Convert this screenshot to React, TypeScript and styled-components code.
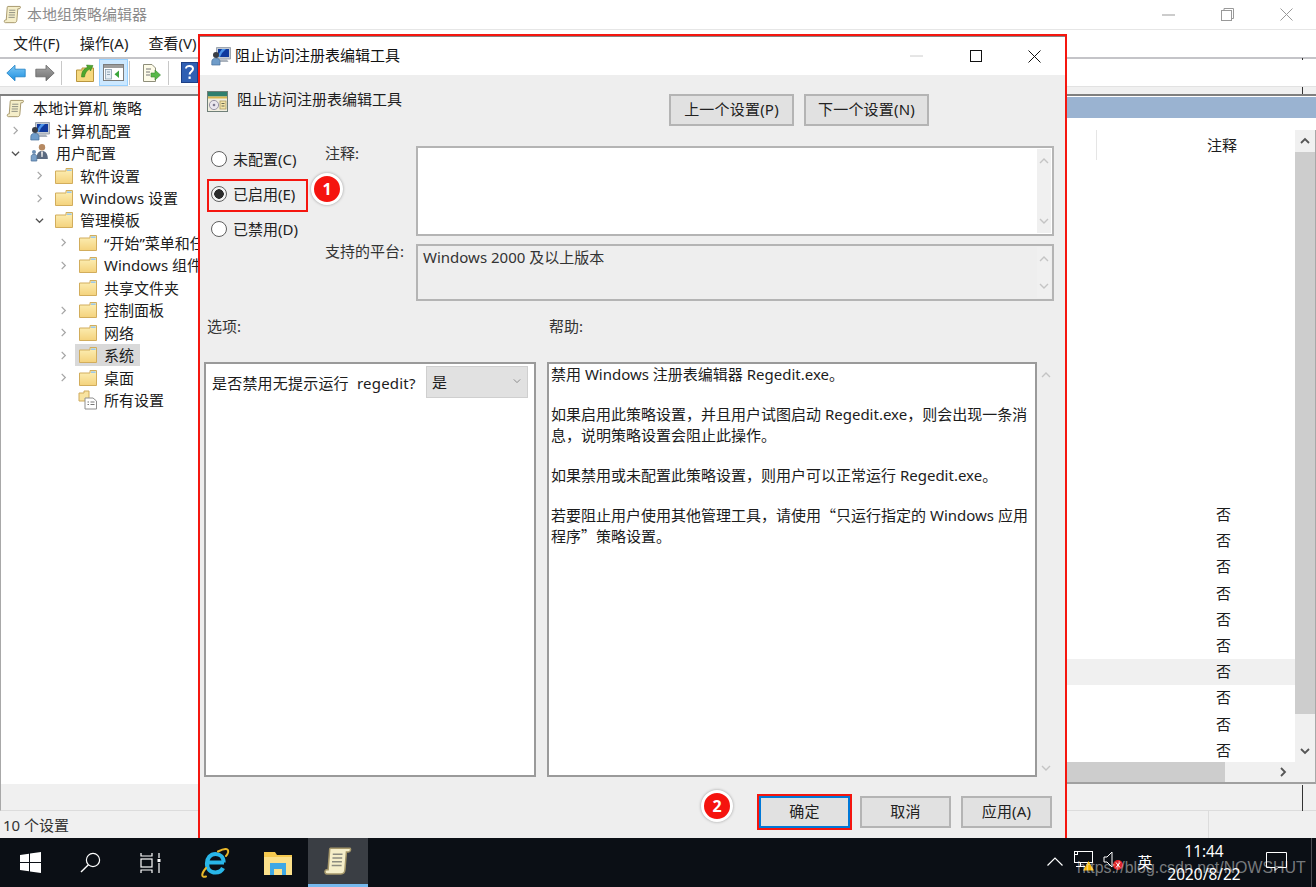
import { FC, ReactNode } from "react";
import styled, { createGlobalStyle } from "styled-components";

const GlobalStyle = createGlobalStyle`
  html, body {
    margin: 0;
    padding: 0;
    background: #fff;
  }
  body {
    font-family: "Noto Sans", "Noto Sans CJK SC", sans-serif;
    font-size: 15px;
    color: #1c1c1c;
  }
  *, *::before, *::after { box-sizing: border-box; }
`;

const Page = styled.div`
  position: relative;
  width: 1316px;
  height: 887px;
  overflow: hidden;
  display: flex;
  flex-direction: column;
  background: #fff;
`;

/* main window */

const TitleBar = styled.div`
  height: 30px;
  flex: none;
  display: flex;
  align-items: center;
  padding-left: 3px;
  border-bottom: 1px solid #e6e6e6;
`;

const TitleText = styled.span`
  margin-left: 5px;
  padding-bottom: 2px;
  color: #8b8b8b;
`;

const WindowControls = styled.div<{ $inset?: number }>`
  margin-left: auto;
  margin-right: ${(p) => p.$inset ?? 0}px;
  display: flex;
  align-items: center;
  svg { display: block; }
`;

const ControlSlot = styled.div`
  width: 59px;
  display: flex;
  justify-content: center;
`;

const MenuBar = styled.div`
  height: 27px;
  flex: none;
  display: flex;
  align-items: center;
  padding: 0 0 2px 13px;
  gap: 20px;
`;

const Toolbar = styled.div`
  height: 29px;
  flex: none;
  display: flex;
  align-items: center;
  padding-left: 6px;
  border-top: 2px solid #c4c4c8;
`;

const ToolSlot = styled.div<{ $w: number; $active?: boolean }>`
  width: ${(p) => p.$w}px;
  height: 27px;
  flex: none;
  display: flex;
  align-items: center;
  justify-content: center;
  ${(p) => (p.$active ? "background: #cce8ff; border: 1px solid #99d1ff;" : "")}
`;

const ToolDivider = styled.div`
  width: 1px;
  height: 24px;
  flex: none;
  background: #c8c8c8;
`;

const ResizeTick = styled.i<{ $h: number; $top: number }>`
  position: absolute;
  left: 1302px;
  top: ${(p) => p.$top}px;
  width: 1px;
  height: ${(p) => p.$h}px;
  background: #333;
`;

const Strip = styled.div`
  height: 8px;
  flex: none;
  background: #f0f0f0;
  border-top: 1px solid #e2e2e2;
`;

const Workspace = styled.div`
  flex: 1;
  min-height: 0;
  display: flex;
  border-top: 2px solid #7f7f7f;
`;

const TreePane = styled.div`
  width: 198px;
  flex: none;
  border-left: 1px solid #a8a8a8;
  overflow: hidden;
`;

const TreeBody = styled.div`
  position: relative;
  z-index: 0;
  padding-top: 1px;
`;

const TreeRow = styled.div<{ $level: number; $root?: boolean }>`
  height: 22.46px;
  display: flex;
  align-items: center;
  white-space: nowrap;
  padding-left: ${(p) => (p.$root ? 5 : p.$level * 24 + 2)}px;
`;

const Arrow = styled.div`
  width: 24px;
  flex: none;
  display: flex;
  justify-content: center;
  svg { display: block; }
`;

const TreeIcon = styled.div<{ $root?: boolean }>`
  width: ${(p) => (p.$root ? 26 : 28)}px;
  flex: none;
  display: flex;
  padding-left: ${(p) => (p.$root ? 0 : 3)}px;
  svg { display: block; }
`;

const TreeLabel = styled.span<{ $selected?: boolean }>`
  position: relative;
  line-height: 22px;
  margin-left: 1px;
  ${(p) =>
    p.$selected
      ? `&::before {
          content: "";
          position: absolute;
          z-index: -1;
          left: -29px;
          right: -6px;
          top: 0;
          bottom: 0;
          background: #d9d9d9;
        }`
      : ""}
`;

const ListPane = styled.div`
  flex: 1;
  min-width: 0;
  display: flex;
  flex-direction: column;
  padding-top: 1px;
`;

const BlueBar = styled.div`
  height: 21px;
  flex: none;
  background: #9ab3d1;
`;

const ListBody = styled.div`
  flex: 1;
  min-height: 0;
  display: flex;
  padding-top: 12px;
`;

const Rows = styled.div`
  flex: 1;
  min-width: 0;
  overflow: hidden;
`;

const ColumnHeader = styled.div`
  height: 30px;
  display: flex;
  align-items: center;
`;

const ColumnName = styled.div`
  width: 899px;
  height: 100%;
  flex: none;
  border-right: 1px solid #e5e5e5;
`;

const ColumnNote = styled.div`
  padding: 0 0 2px 110px;
`;

const RowList = styled.div`
  padding-top: 342px;
`;

const NoteRow = styled.div<{ $hover?: boolean }>`
  height: 26.2px;
  line-height: 25px;
  text-align: right;
  padding-right: 64px;
  background: ${(p) => (p.$hover ? "#f0f0f0" : "transparent")};
`;

const VScroll = styled.div`
  width: 21px;
  flex: none;
  display: flex;
  flex-direction: column;
  background: #f0f0f0;
  border-right: 1px solid #a8a8a8;
`;

const ScrollEnd = styled.div`
  height: 22px;
  flex: none;
  display: flex;
  align-items: center;
  justify-content: center;
  svg { display: block; }
`;

const VThumb = styled.div`
  height: 562px;
  flex: none;
  background: #cdcdcd;
`;

const ScrollEndBottom = styled(ScrollEnd)`
  margin-top: auto;
`;

const HScroll = styled.div`
  height: 22px;
  flex: none;
  display: flex;
  align-items: center;
  background: #f0f0f0;
  border-bottom: 2px solid #a0a0a0;
  border-right: 1px solid #a8a8a8;
`;

const HThumb = styled.div`
  width: 1027px;
  height: 100%;
  background: #cdcdcd;
`;

const HArrow = styled.div`
  margin-left: 53px;
  display: flex;
  svg { display: block; }
`;

const LowerStrip = styled.div`
  height: 27px;
  flex: none;
  background: #f0f0f0;
  border-bottom: 1px solid #dcdcdc;
  border-left: 1px solid #a8a8a8;
`;

const StatusBar = styled.div`
  height: 27px;
  flex: none;
  display: flex;
  align-items: center;
  padding-left: 3px;
  background: #f0f0f0;
  color: #333;
`;

const StatusDivider = styled.div`
  margin-left: auto;
  margin-right: 107px;
  width: 1px;
  height: 100%;
  background: #dcdcdc;
`;

/* dialog */

const Dialog = styled.div`
  position: absolute;
  left: 198px;
  top: 34px;
  width: 869px;
  height: 806px;
  border: 2px solid #f5160f;
  background: #eeeeee;
  display: flex;
  flex-direction: column;
`;

const DialogTitle = styled.div`
  height: 39px;
  flex: none;
  display: flex;
  align-items: center;
  padding-left: 11px;
  background: #fff;
  border-top: 1px solid #868686;
  color: #111;
`;

const DialogTitleText = styled.span`
  margin-left: 4px;
  padding-bottom: 3px;
`;

const DialogBody = styled.div`
  flex: 1;
  padding: 0 11px 0 4px;
  display: flex;
  flex-direction: column;
`;

const HeadRow = styled.div`
  height: 66px;
  flex: none;
  display: flex;
  align-items: flex-start;
`;

const HeadIcon = styled.div`
  margin: 16px 0 0 3px;
  width: 22px;
  svg { display: block; }
`;

const HeadText = styled.span`
  margin: 13px 0 0 8px;
  line-height: 22px;
`;

const NavButtons = styled.div`
  margin: 19px 125px 0 auto;
  display: flex;
  gap: 10px;
`;

const Button = styled.div<{ $w: number; $primary?: boolean }>`
  width: ${(p) => p.$w}px;
  height: 32px;
  display: flex;
  align-items: center;
  justify-content: center;
  padding-bottom: 3px;
  letter-spacing: 0.2px;
  background: #e1e1e1;
  border: 2px solid ${(p) => (p.$primary ? "#0078d7" : "#b4b4b4")};
  ${(p) => (p.$primary ? "outline: 2px solid #f5160f;" : "")}
  color: #222;
`;

const ConfigRow = styled.div`
  height: 160px;
  flex: none;
  display: flex;
`;

const RadioColumn = styled.div`
  width: 121px;
  flex: none;
`;

const RadioRow = styled.div<{ $marked?: boolean }>`
  position: relative;
  height: 35px;
  display: flex;
  align-items: center;
  gap: 6px;
  padding-left: 7px;
  color: #222;
  ${(p) =>
    p.$marked
      ? `&::before {
          content: "";
          position: absolute;
          left: 3px;
          top: 3px;
          width: 101px;
          height: 33px;
          border: 2px solid #f5160f;
        }`
      : ""}
`;

const RadioDot = styled.span<{ $checked?: boolean }>`
  width: 16px;
  height: 16px;
  flex: none;
  border-radius: 50%;
  border: 1.5px solid #5f5f5f;
  background: ${(p) =>
    p.$checked ? "radial-gradient(circle, #2b2b2b 0 4.5px, #f4f4f4 5px)" : "#fff"};
`;

const Badge = styled.div<{ $x: number; $y: number }>`
  position: absolute;
  left: ${(p) => p.$x}px;
  top: ${(p) => p.$y}px;
  width: 32px;
  height: 32px;
  border-radius: 50%;
  display: flex;
  align-items: center;
  justify-content: center;
  background: #f5140f;
  border: 3px solid #fff;
  box-shadow: 0 0 3px rgba(0, 0, 0, 0.35);
  color: #fff;
  font-weight: 700;
  font-size: 16px;
  z-index: 2;
`;

const FieldGrid = styled.div`
  flex: 1;
  display: grid;
  grid-template-columns: 91px 1fr;
  grid-template-rows: 90px 57px;
  row-gap: 8px;
  padding-top: 5px;
`;

const FieldLabel = styled.div`
  line-height: 14px;
  color: #333;
`;

const FieldBox = styled.div<{ $readOnly?: boolean }>`
  display: flex;
  justify-content: space-between;
  padding: 1px;
  border: 2px solid #b4b4b4;
  background: ${(p) => (p.$readOnly ? "#eeeeee" : "#fff")};
  color: #333;
`;

const FieldValue = styled.div`
  padding-left: 4px;
  line-height: 20px;
`;

const FieldScroll = styled.div`
  width: 14px;
  flex: none;
  display: flex;
  flex-direction: column;
  align-items: center;
  justify-content: space-between;
  padding: 7px 0;
  background: #f0f0f0;
  svg { display: block; }
`;

const SectionRow = styled.div`
  height: 61px;
  flex: none;
  display: grid;
  grid-template-columns: 342px 1fr;
  padding: 15px 0 0 3px;
  line-height: 20px;
  color: #333;
`;

const PanelRow = styled.div`
  height: 415px;
  flex: none;
  display: grid;
  grid-template-columns: 332px 490px 1fr;
  column-gap: 11px;
`;

const Panel = styled.div`
  min-width: 0;
  background: #fff;
  border: 2px solid #9a9a9a;
`;

const OptionLine = styled.div`
  display: flex;
  align-items: center;
  padding: 2px 0 0 6px;
`;

const OptionLabel = styled.span`
  width: 214px;
  flex: none;
  white-space: nowrap;
  letter-spacing: 0.2px;
`;

const Combo = styled.div`
  width: 102px;
  height: 32px;
  display: flex;
  align-items: center;
  justify-content: space-between;
  padding: 0 6px 2px 5px;
  background: #e1e1e1;
  border: 1px solid #cfcfcf;
  svg { display: block; }
`;

const HelpText = styled.div`
  padding: 0 3px 0 2px;
  line-height: 20.2px;
  color: #1c1c1c;
`;

const HelpParagraph = styled.p`
  margin: 0 0 20.2px;
`;

const CjkQuote = styled.span`
  font-family: "Noto Sans CJK SC", sans-serif;
`;

const PanelScroll = styled.div`
  margin-left: -11px;
  display: flex;
  flex-direction: column;
  align-items: center;
  justify-content: space-between;
  padding: 8px 0 4px;
  width: 17px;
  svg { display: block; }
`;

const DialogFooter = styled.div`
  position: relative;
  margin-top: 19px;
  display: flex;
  justify-content: flex-end;
  gap: 10px;
  padding-right: 2px;
`;

/* taskbar */

const Taskbar = styled.div`
  position: relative;
  height: 49px;
  flex: none;
  display: flex;
  align-items: center;
  background: #0b0f15;
  color: #fff;
`;

const TaskButton = styled.div<{ $active?: boolean; $gapLeft?: number }>`
  width: 60px;
  height: 100%;
  flex: none;
  margin-left: ${(p) => p.$gapLeft ?? 0}px;
  display: flex;
  align-items: center;
  justify-content: center;
  ${(p) => (p.$active ? "background: #3a3e44; border-bottom: 3px solid #76b9ed;" : "")}
  svg { display: block; }
`;

const Tray = styled.div`
  margin-left: auto;
  height: 100%;
  display: flex;
  align-items: center;
`;

const TrayItem = styled.div<{ $w: number }>`
  width: ${(p) => p.$w}px;
  height: 100%;
  display: flex;
  align-items: center;
  justify-content: center;
  padding-bottom: 3px;
  svg { display: block; }
`;

const Clock = styled.div`
  width: 88px;
  text-align: center;
  line-height: 23px;
  font-size: 15.4px;
`;

const DesktopEdge = styled.div`
  width: 12px;
  height: 100%;
  position: relative;
  &::after {
    content: "";
    position: absolute;
    left: 7px;
    top: 0;
    bottom: 0;
    width: 1px;
    background: #4a4d52;
  }
`;

const Watermark = styled.div`
  position: absolute;
  left: 1077px;
  top: 20px;
  font-family: "Liberation Sans", sans-serif;
  font-size: 15.9px;
  line-height: 20px;
  color: rgba(255, 255, 255, 0.45);
  white-space: nowrap;
`;

/* drawings */

const Chevron: FC<{ dir: "up" | "down" | "left" | "right"; size?: number; color?: string; width?: number }> = ({
  dir,
  size = 10,
  color = "#777",
  width = 1.4,
}) => {
  const paths = {
    up: "M1 7 L5 3 L9 7",
    down: "M1 3 L5 7 L9 3",
    right: "M3 1 L7 5 L3 9",
    left: "M7 1 L3 5 L7 9",
  };
  return (
    <svg width={size} height={size} viewBox="0 0 10 10" fill="none">
      <path d={paths[dir]} stroke={color} strokeWidth={width} />
    </svg>
  );
};

const ScrollIcon: FC<{ size?: number }> = ({ size = 20 }) => (
  <svg width={size} height={size} viewBox="0 0 20 20">
    <path d="M5 1.5 H18 C18.6 1.5 18.6 4 17 4 L15.6 4 L14.6 16 C14.4 18 13.4 18.6 12 18.6 H2.5 C1 18.6 .8 15.8 2.5 15.8 L3.4 15.8 L4.4 3 C4.4 2 4.6 1.5 5 1.5 Z" fill="#f5eec9" stroke="#a5976a" strokeWidth="1" />
    <path d="M6.5 5.5 H13 M6.3 8 H12.8 M6 10.5 H12.6 M5.8 13 H12.4" stroke="#8c8c80" strokeWidth="1" />
  </svg>
);

const FolderIcon: FC = () => (
  <svg width="20" height="18" viewBox="0 0 20 18">
    <defs>
      <linearGradient id="folderFill" x1="0" y1="0" x2="0" y2="1">
        <stop offset="0" stopColor="#fdf0b8" />
        <stop offset="1" stopColor="#f4d27c" />
      </linearGradient>
    </defs>
    <path d="M1.5 4 H12 V1.5 H18.5 V16.5 H1.5 Z" fill="url(#folderFill)" stroke="#d2ad5c" strokeWidth="1" />
    <rect x="13" y="2.4" width="4.6" height="1.6" fill="#9cc8e8" />
  </svg>
);

const AllSettingsIcon: FC = () => (
  <svg width="20" height="20" viewBox="0 0 20 20">
    <path d="M1 3 H6 V1 H11 V11 H1 Z" fill="#f8e3a0" stroke="#cfab5e" strokeWidth="1" />
    <path d="M7 8 H15 L18.5 11 V19 H7 Z" fill="#fff" stroke="#8e8e8e" strokeWidth="1" />
    <path d="M9.5 12 H11 M9.5 14.5 H11 M12.5 12 H16.5 M12.5 14.5 H16.5" stroke="#777" strokeWidth="1" />
  </svg>
);

const ComputerIcon: FC = () => (
  <svg width="20" height="20" viewBox="0 0 20 20">
    <path d="M5.5 1.5 H19.5 V13 H5.5 Z" fill="#c4cad2" stroke="#8d96a1" strokeWidth=".8" />
    <rect x="7" y="3" width="11" height="8" fill="#103a9e" />
    <path d="M11 3 H15 L11 7 L9 11 H7 V9 Z" fill="#4b93ea" />
    <path d="M9 13.5 H16 L17.5 16 H8 Z" fill="#aab2bc" />
    <circle cx="5" cy="9" r="3" fill="#3a3d44" />
    <path d="M.8 19 V15.5 C.8 13.2 2.8 12.2 5 12.2 C7.2 12.2 9 13.2 9 15.5 V19 Z" fill="#6f9cc9" stroke="#466f9a" strokeWidth=".7" />
  </svg>
);

const UsersIcon: FC = () => (
  <svg width="20" height="20" viewBox="0 0 20 20">
    <circle cx="12" cy="4.2" r="3.2" fill="#b68a62" />
    <path d="M6.5 16 C6.5 10.5 8.5 8 12 8 C15.5 8 17.8 10.5 17.8 16 Z" fill="#5b6a80" />
    <path d="M11 8.4 H13 L12.6 14 H11.4 Z" fill="#e7e7e7" />
    <circle cx="4" cy="9" r="2" fill="#6d8fb5" />
    <path d="M1.2 18 V13.5 C1.2 12 2.2 11.4 4 11.4 C5.8 11.4 6.8 12 6.8 13.5 V18 Z" fill="#7aa0c8" stroke="#4d7199" strokeWidth=".8" />
  </svg>
);

const NavArrow: FC<{ dir: "back" | "forward"; from: string; to: string; edge: string }> = ({ dir, from, to, edge }) => (
  <svg width="20" height="18" viewBox="0 0 20 18">
    <defs>
      <linearGradient id={`nav-${dir}`} x1="0" y1="0" x2="0" y2="1">
        <stop offset="0" stopColor={from} />
        <stop offset="1" stopColor={to} />
      </linearGradient>
    </defs>
    <path
      d={dir === "back" ? "M.8 9 L9 1.2 V5.2 H19.2 V12.8 H9 V16.8 Z" : "M19.2 9 L11 1.2 V5.2 H.8 V12.8 H11 V16.8 Z"}
      fill={`url(#nav-${dir})`}
      stroke={edge}
      strokeWidth=".8"
    />
  </svg>
);

const UpFolderIcon: FC = () => (
  <svg width="20" height="20" viewBox="0 0 20 20">
    <path d="M1.5 7 H7 V5 H18.5 V18.5 H1.5 Z" fill="#f6d97f" stroke="#b9963f" strokeWidth="1" />
    <path d="M6.5 14 C6.5 8 9 5.5 12.5 4.5 L11.5 2 L18 2.5 L15.5 8 L14.6 6 C12 7.5 10 10 9.5 14 Z" fill="#4ea72e" stroke="#2f7a1a" strokeWidth=".5" />
  </svg>
);

const PaneToggleIcon: FC = () => (
  <svg width="21" height="17" viewBox="0 0 21 17">
    <rect x=".5" y=".5" width="20" height="16" fill="#fff" stroke="#7c7c7c" strokeWidth="1" />
    <rect x="1" y="1" width="19" height="3" fill="#9c9c9c" />
    <rect x="2.5" y="5.5" width="6" height="9.5" fill="#e7eef4" stroke="#8aa0b0" strokeWidth=".8" />
    <path d="M4 8 H7 M4 10.5 H7" stroke="#7d93a5" strokeWidth=".8" />
    <path d="M16 6.5 V14 L11.5 10.2 Z" fill="#3aa53a" />
  </svg>
);

const ExportIcon: FC = () => (
  <svg width="20" height="20" viewBox="0 0 20 20">
    <path d="M2.5 1.5 H11 L14.5 5 V18.5 H2.5 Z" fill="#fdfbe8" stroke="#8e8e7a" strokeWidth="1" />
    <path d="M5 6 H10 M5 9 H9 M5 12 H9" stroke="#777" strokeWidth="1" />
    <path d="M10 10 H14 V7 L19.5 12 L14 17 V14 H10 Z" fill="#58b947" stroke="#3b8a2c" strokeWidth=".6" />
  </svg>
);

const HelpIcon: FC = () => (
  <svg width="17" height="21" viewBox="0 0 17 21">
    <rect x=".5" y=".5" width="16" height="20" fill="#2f5fb3" stroke="#1d3f86" />
    <path d="M5 6.5 C5 3 12 3 12 6.8 C12 9.5 8.6 9.6 8.6 12.6" fill="none" stroke="#fff" strokeWidth="2" />
    <rect x="7.5" y="14.5" width="2.2" height="2.4" fill="#fff" />
  </svg>
);

const PolicyWindowIcon: FC = () => (
  <svg width="21" height="21" viewBox="0 0 21 21">
    <rect x=".5" y=".5" width="20" height="20" fill="#f1eee0" stroke="#6f7f78" strokeWidth="1" />
    <rect x="1" y="1" width="19" height="4.5" fill="#2f7f6e" />
    <rect x="1" y="5.5" width="19" height="2" fill="#d9b64e" />
    <circle cx="7" cy="14" r="4.6" fill="#e9e6ee" stroke="#9a96a8" strokeWidth="1" />
    <circle cx="7" cy="14" r="1.3" fill="#7f7b90" />
    <rect x="13" y="10" width="6" height="8" fill="#f3e4a8" stroke="#a99a62" strokeWidth=".8" />
    <path d="M14.5 12.5 H17.5 M14.5 15 H17.5" stroke="#6b6a52" strokeWidth="1" />
  </svg>
);

const WindowsLogo: FC = () => (
  <svg width="21" height="21" viewBox="0 0 21 21">
    <path d="M0 3 L9 1.7 V10 H0 Z M10 1.5 L21 0 V10 H10 Z M0 11 H9 V19.3 L0 18 Z M10 11 H21 V21 L10 19.5 Z" fill="#fff" />
  </svg>
);

const SearchGlyph: FC = () => (
  <svg width="21" height="21" viewBox="0 0 21 21" fill="none">
    <circle cx="13" cy="8" r="6.6" stroke="#fff" strokeWidth="1.2" />
    <path d="M8.4 12.8 L1 20" stroke="#fff" strokeWidth="1.4" />
  </svg>
);

const TaskViewGlyph: FC = () => (
  <svg width="21" height="20" viewBox="0 0 21 20" fill="none" stroke="#fff" strokeWidth="1.2">
    <path d="M1 0 V3 H12 V0" />
    <rect x="1" y="6" width="11" height="8" />
    <path d="M1 20 V17 H12 V20" />
    <path d="M19 0 V5 M19 10 V20" />
    <rect x="17.5" y="6" width="3" height="3" fill="#fff" stroke="none" />
  </svg>
);

const IeGlyph: FC = () => (
  <svg width="30" height="30" viewBox="0 0 30 30" fill="none">
    <path d="M24 14.5 H8 M23.6 14.5 C23.6 9 20 6 15.5 6 C10.5 6 7 10 7 15.5 C7 21 10.5 24.5 15.5 24.5 C19 24.5 21.6 23 23 20" stroke="#29b6e8" strokeWidth="4.2" />
    <path d="M6 20 C1 26 1 30 6 28.5 M18 3.5 C25 0 29 0 28 4.5 C27.6 6 27 7 26 8" stroke="#e8b72a" strokeWidth="2" strokeLinecap="round" />
  </svg>
);

const ExplorerGlyph: FC = () => (
  <svg width="28" height="25" viewBox="0 0 28 25">
    <path d="M0 2 H11 L13 5 H28 V25 H0 Z" fill="#f5c94f" />
    <rect x="0" y="7" width="28" height="18" fill="#fbe08a" />
    <path d="M6 13 H22 V25 H18 V19 H10 V25 H6 Z" fill="#3ea8e5" />
  </svg>
);

const NetworkGlyph: FC = () => (
  <svg width="22" height="20" viewBox="0 0 22 20" fill="none">
    <rect x=".5" y=".5" width="18" height="11" stroke="#fff" />
    <rect x=".5" y=".5" width="3" height="3" stroke="#fff" />
    <path d="M2 15.5 H11 M6.5 12 V15.5" stroke="#fff" />
    <path d="M14.5 10 L20 19.5 H9 Z" fill="#f7b500" />
  </svg>
);

const SpeakerGlyph: FC = () => (
  <svg width="24" height="20" viewBox="0 0 24 20" fill="none">
    <path d="M1 6 H4 L9 1 V16 L4 11 H1 Z" stroke="#fff" />
    <circle cx="15" cy="14" r="5" fill="#e0242a" />
    <path d="M13 11.5 L17 16.5 M17 11.5 L13 16.5" stroke="#fff" />
  </svg>
);

const CaretGlyph: FC = () => (
  <svg width="16" height="9" viewBox="0 0 16 9" fill="none">
    <path d="M.5 8.5 L8 1 L15.5 8.5" stroke="#fff" strokeWidth="1.2" />
  </svg>
);

const NotifyGlyph: FC = () => (
  <svg width="21" height="21" viewBox="0 0 21 21" fill="none">
    <path d="M.5 1.5 H20.5 V16.5 H12 L9 19.5 V16.5 H.5 Z" stroke="#fff" />
  </svg>
);

/* data */

interface TreeItem {
  level: number;
  label: string;
  arrow?: "right" | "down";
  icon: ReactNode;
  selected?: boolean;
}

const treeItems: TreeItem[] = [
  { level: 0, label: "计算机配置", arrow: "right", icon: <ComputerIcon /> },
  { level: 0, label: "用户配置", arrow: "down", icon: <UsersIcon /> },
  { level: 1, label: "软件设置", arrow: "right", icon: <FolderIcon /> },
  { level: 1, label: "Windows 设置", arrow: "right", icon: <FolderIcon /> },
  { level: 1, label: "管理模板", arrow: "down", icon: <FolderIcon /> },
  { level: 2, label: "“开始”菜单和任务栏", arrow: "right", icon: <FolderIcon /> },
  { level: 2, label: "Windows 组件", arrow: "right", icon: <FolderIcon /> },
  { level: 2, label: "共享文件夹", icon: <FolderIcon /> },
  { level: 2, label: "控制面板", arrow: "right", icon: <FolderIcon /> },
  { level: 2, label: "网络", arrow: "right", icon: <FolderIcon /> },
  { level: 2, label: "系统", arrow: "right", icon: <FolderIcon />, selected: true },
  { level: 2, label: "桌面", arrow: "right", icon: <FolderIcon /> },
  { level: 2, label: "所有设置", icon: <AllSettingsIcon /> },
];

const noteRows = Array.from({ length: 10 }, (_, i) => i);

const App: FC = () => {
  return (
    <Page>
      <GlobalStyle />
      <TitleBar>
        <ScrollIcon size={19} />
        <TitleText>本地组策略编辑器</TitleText>
        <WindowControls>
          <ControlSlot>
            <svg width="13" height="2" viewBox="0 0 13 2"><path d="M0 1 H13" stroke="#999" strokeWidth="1" /></svg>
          </ControlSlot>
          <ControlSlot>
            <svg width="13" height="13" viewBox="0 0 13 13" fill="none" stroke="#999">
              <rect x=".5" y="2.5" width="10" height="10" />
              <path d="M3 2.5 V.5 H12.5 V10.5 H10.5" />
            </svg>
          </ControlSlot>
          <ControlSlot>
            <svg width="13" height="13" viewBox="0 0 13 13" stroke="#999"><path d="M.5 .5 L12.5 12.5 M12.5 .5 L.5 12.5" /></svg>
          </ControlSlot>
        </WindowControls>
      </TitleBar>

      <MenuBar>
        <span>文件(F)</span>
        <span>操作(A)</span>
        <span>查看(V)</span>
        <span>帮助(H)</span>
      </MenuBar>

      <Toolbar>
        <ToolSlot $w={20}><NavArrow dir="back" from="#7cc8f5" to="#1d8fe0" edge="#1c7fc4" /></ToolSlot>
        <ToolSlot $w={9} />
        <ToolSlot $w={20}><NavArrow dir="forward" from="#a8a8a8" to="#707070" edge="#666" /></ToolSlot>
        <ToolSlot $w={6} />
        <ToolDivider />
        <ToolSlot $w={13} />
        <ToolSlot $w={20}><UpFolderIcon /></ToolSlot>
        <ToolSlot $w={4} />
        <ToolSlot $w={29} $active><PaneToggleIcon /></ToolSlot>
        <ToolSlot $w={1} />
        <ToolDivider />
        <ToolSlot $w={11} />
        <ToolSlot $w={20}><ExportIcon /></ToolSlot>
        <ToolSlot $w={7} />
        <ToolDivider />
        <ToolSlot $w={12} />
        <ToolSlot $w={17}><HelpIcon /></ToolSlot>
      </Toolbar>
      <ResizeTick $top={58} $h={2} />
      <ResizeTick $top={87} $h={7} />

      <Strip />

      <Workspace>
        <TreePane>
          <TreeBody>
            <TreeRow $level={0} $root>
              <TreeIcon $root><ScrollIcon size={19} /></TreeIcon>
              <TreeLabel>本地计算机 策略</TreeLabel>
            </TreeRow>
            {treeItems.map((item) => (
              <TreeRow key={item.label} $level={item.level}>
                <Arrow>{item.arrow && <Chevron dir={item.arrow} size={9} color={item.arrow === "down" ? "#555" : "#a6a6a6"} />}</Arrow>
                <TreeIcon>{item.icon}</TreeIcon>
                <TreeLabel $selected={item.selected}>{item.label}</TreeLabel>
              </TreeRow>
            ))}
          </TreeBody>
        </TreePane>
        <ListPane>
          <BlueBar />
          <ListBody>
            <Rows>
              <ColumnHeader>
                <ColumnName />
                <ColumnNote>注释</ColumnNote>
              </ColumnHeader>
              <RowList>
                {noteRows.map((i) => (
                  <NoteRow key={i} $hover={i === 6}>否</NoteRow>
                ))}
              </RowList>
            </Rows>
            <VScroll>
              <ScrollEnd><Chevron dir="up" color="#555" width={1.8} /></ScrollEnd>
              <VThumb />
              <ScrollEndBottom><Chevron dir="down" color="#555" width={1.8} /></ScrollEndBottom>
            </VScroll>
          </ListBody>
          <HScroll>
            <HThumb />
            <HArrow><Chevron dir="right" color="#555" width={1.8} /></HArrow>
          </HScroll>
        </ListPane>
      </Workspace>
      <LowerStrip />
      <ResizeTick $top={785} $h={26} />
      <StatusBar>
        <span>10 个设置</span>
        <StatusDivider />
      </StatusBar>

      <Dialog>
        <DialogTitle>
          <ComputerIcon />
          <DialogTitleText>阻止访问注册表编辑工具</DialogTitleText>
          <WindowControls $inset={1}>
            <ControlSlot>
              <svg width="13" height="2" viewBox="0 0 13 2"><path d="M0 1 H13" stroke="#ccc" strokeWidth="1" /></svg>
            </ControlSlot>
            <ControlSlot>
              <svg width="12" height="12" viewBox="0 0 12 12" fill="none" stroke="#111"><rect x=".5" y=".5" width="11" height="11" /></svg>
            </ControlSlot>
            <ControlSlot>
              <svg width="13" height="13" viewBox="0 0 13 13" stroke="#111"><path d="M.5 .5 L12.5 12.5 M12.5 .5 L.5 12.5" /></svg>
            </ControlSlot>
          </WindowControls>
        </DialogTitle>
        <DialogBody>
          <HeadRow>
            <HeadIcon><PolicyWindowIcon /></HeadIcon>
            <HeadText>阻止访问注册表编辑工具</HeadText>
            <NavButtons>
              <Button $w={125}>上一个设置(P)</Button>
              <Button $w={125}>下一个设置(N)</Button>
            </NavButtons>
          </HeadRow>
          <ConfigRow>
            <RadioColumn>
              <RadioRow><RadioDot />未配置(C)</RadioRow>
              <RadioRow $marked>
                <RadioDot $checked />已启用(E)
                <Badge $x={107} $y={-3}>1</Badge>
              </RadioRow>
              <RadioRow><RadioDot />已禁用(D)</RadioRow>
            </RadioColumn>
            <FieldGrid>
              <FieldLabel>注释:</FieldLabel>
              <FieldBox>
                <FieldValue />
                <FieldScroll>
                  <Chevron dir="up" color="#c4c4c4" />
                  <Chevron dir="down" color="#c4c4c4" />
                </FieldScroll>
              </FieldBox>
              <FieldLabel>支持的平台:</FieldLabel>
              <FieldBox $readOnly>
                <FieldValue>Windows 2000 及以上版本</FieldValue>
                <FieldScroll>
                  <Chevron dir="up" color="#c4c4c4" />
                  <Chevron dir="down" color="#c4c4c4" />
                </FieldScroll>
              </FieldBox>
            </FieldGrid>
          </ConfigRow>
          <SectionRow>
            <div>选项:</div>
            <div>帮助:</div>
          </SectionRow>
          <PanelRow>
            <Panel>
              <OptionLine>
                <OptionLabel>是否禁用无提示运行&nbsp;&nbsp;regedit?</OptionLabel>
                <Combo>是<Chevron dir="down" size={8} color="#888" width={1.2} /></Combo>
              </OptionLine>
            </Panel>
            <Panel>
              <HelpText>
                <HelpParagraph>禁用 Windows 注册表编辑器 Regedit.exe。</HelpParagraph>
                <HelpParagraph>如果启用此策略设置，并且用户试图启动 Regedit.exe，则会出现一条消息，说明策略设置会阻止此操作。</HelpParagraph>
                <HelpParagraph>如果禁用或未配置此策略设置，则用户可以正常运行 Regedit.exe。</HelpParagraph>
                <HelpParagraph>
                  若要阻止用户使用其他管理工具，请使用<CjkQuote>“</CjkQuote>只运行指定的 Windows 应用程序<CjkQuote>”</CjkQuote>策略设置。
                </HelpParagraph>
              </HelpText>
            </Panel>
            <PanelScroll>
              <Chevron dir="up" color="#c4c4c4" />
              <Chevron dir="down" color="#c4c4c4" />
            </PanelScroll>
          </PanelRow>
          <DialogFooter>
            <Badge $x={497} $y={-6}>2</Badge>
            <Button $w={91} $primary>确定</Button>
            <Button $w={91}>取消</Button>
            <Button $w={91}>应用(A)</Button>
          </DialogFooter>
        </DialogBody>
      </Dialog>

      <Taskbar>
        <TaskButton><WindowsLogo /></TaskButton>
        <TaskButton><SearchGlyph /></TaskButton>
        <TaskButton><TaskViewGlyph /></TaskButton>
        <TaskButton $gapLeft={5}><IeGlyph /></TaskButton>
        <TaskButton $gapLeft={3}><ExplorerGlyph /></TaskButton>
        <TaskButton $active><ScrollIcon size={30} /></TaskButton>
        <Tray>
          <TrayItem $w={30}><CaretGlyph /></TrayItem>
          <TrayItem $w={30}><NetworkGlyph /></TrayItem>
          <TrayItem $w={30}><SpeakerGlyph /></TrayItem>
          <TrayItem $w={30}>英</TrayItem>
          <Clock>
            <div>11:44</div>
            <div>2020/8/22</div>
          </Clock>
          <TrayItem $w={56}><NotifyGlyph /></TrayItem>
          <DesktopEdge />
        </Tray>
        <Watermark>https://blog.csdn.net/NOWSHUT</Watermark>
      </Taskbar>
    </Page>
  );
};

export default App;
